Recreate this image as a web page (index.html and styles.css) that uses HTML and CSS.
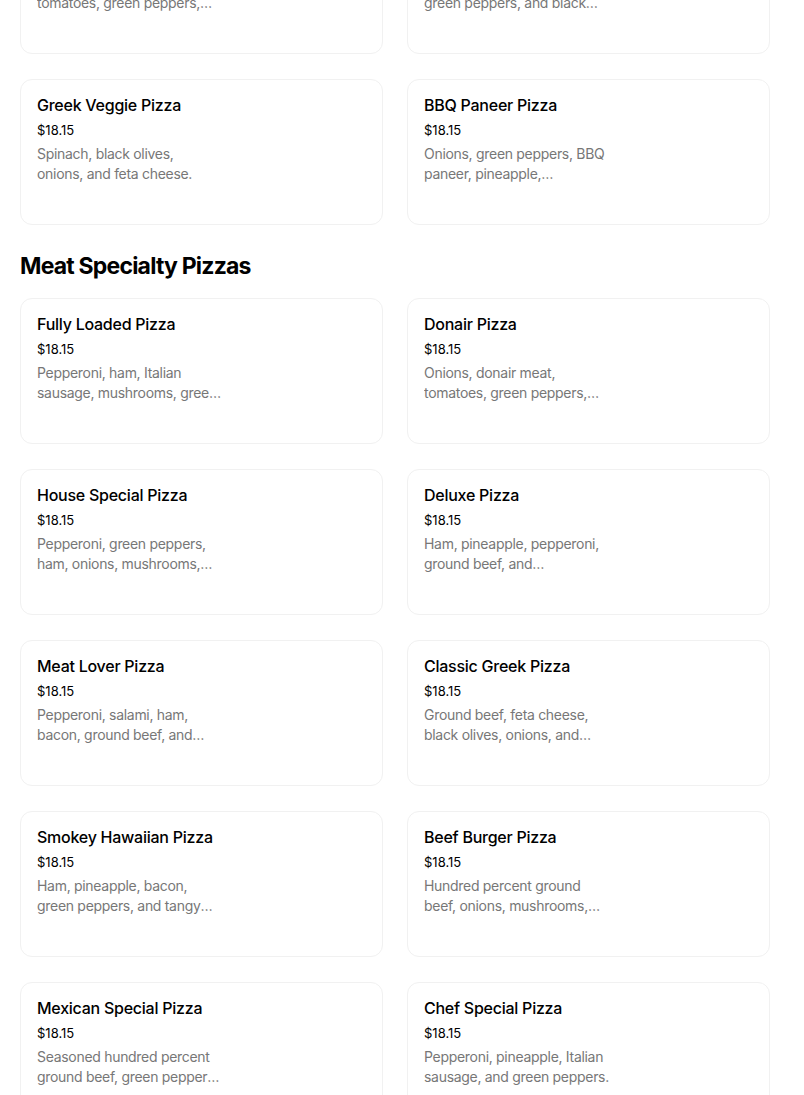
FILE: index.html
```html
<!DOCTYPE html>
<html>
<head>
<meta charset="utf-8">
<link rel="stylesheet" href="styles.css">
</head>
<body>
<div class="page">
  <div class="grid">
    <div class="card"><div class="name">Garden Veggie Pizza</div><div class="price">$18.15</div><div class="desc">Mushrooms, onions, tomatoes, green peppers, and black olives.</div></div>
    <div class="card"><div class="name">Vegetarian Pizza</div><div class="price">$18.15</div><div class="desc">Pineapple, mushrooms, green peppers, and black olives.</div></div>
    <div class="card"><div class="name">Greek Veggie Pizza</div><div class="price">$18.15</div><div class="desc">Spinach, black olives, onions, and feta cheese.</div></div>
    <div class="card"><div class="name">BBQ Paneer Pizza</div><div class="price">$18.15</div><div class="desc">Onions, green peppers, BBQ paneer, pineapple, mushrooms, and cheese.</div></div>
  </div>
  <h2 class="section">Meat Specialty Pizzas</h2>
  <div class="grid">
    <div class="card"><div class="name">Fully Loaded Pizza</div><div class="price">$18.15</div><div class="desc">Pepperoni, ham, Italian sausage, mushrooms, green peppers, and onions.</div></div>
    <div class="card"><div class="name">Donair Pizza</div><div class="price">$18.15</div><div class="desc">Onions, donair meat, tomatoes, green peppers, and donair sauce.</div></div>
    <div class="card"><div class="name">House Special Pizza</div><div class="price">$18.15</div><div class="desc">Pepperoni, green peppers, ham, onions, mushrooms, and ground beef.</div></div>
    <div class="card"><div class="name">Deluxe Pizza</div><div class="price">$18.15</div><div class="desc">Ham, pineapple, pepperoni, ground beef, and mushrooms.</div></div>
    <div class="card"><div class="name">Meat Lover Pizza</div><div class="price">$18.15</div><div class="desc">Pepperoni, salami, ham, bacon, ground beef, and Italian sausage.</div></div>
    <div class="card"><div class="name">Classic Greek Pizza</div><div class="price">$18.15</div><div class="desc">Ground beef, feta cheese, black olives, onions, and tomatoes.</div></div>
    <div class="card"><div class="name">Smokey Hawaiian Pizza</div><div class="price">$18.15</div><div class="desc">Ham, pineapple, bacon, green peppers, and tangy BBQ sauce.</div></div>
    <div class="card"><div class="name">Beef Burger Pizza</div><div class="price">$18.15</div><div class="desc">Hundred percent ground beef, onions, mushrooms, and cheddar.</div></div>
    <div class="card"><div class="name">Mexican Special Pizza</div><div class="price">$18.15</div><div class="desc">Seasoned hundred percent ground beef, green peppers, onions, and jalapenos.</div></div>
    <div class="card"><div class="name">Chef Special Pizza</div><div class="price">$18.15</div><div class="desc">Pepperoni, pineapple, Italian sausage, and green peppers.</div></div>
  </div>
</div>
</body>
</html>
```
FILE: styles.css
```css
html, body {
  margin: 0;
  padding: 0;
  background: #ffffff;
  overflow: hidden;
}
body {
  font-family: Inter, "Noto Sans", sans-serif;
  color: #000000;
}
.page {
  margin-top: -92px;
  padding: 0 34px 0 20px;
}
.grid {
  display: grid;
  grid-template-columns: 1fr 1fr;
  column-gap: 24px;
  row-gap: 25px;
}
.card {
  height: 146px;
  box-sizing: border-box;
  border: 1px solid #f1f1f1;
  border-radius: 12px;
  padding: 15px 16px;
}
.name {
  font-size: 16px;
  font-weight: 500;
  line-height: 20px;
  letter-spacing: -0.25px;
}
.price {
  margin-top: 5px;
  font-size: 13px;
  line-height: 20px;
}
.desc {
  margin-top: 4px;
  width: 186px;
  font-size: 14px;
  line-height: 20px;
  letter-spacing: -0.3px;
  color: #777777;
  display: -webkit-box;
  -webkit-line-clamp: 2;
  -webkit-box-orient: vertical;
  overflow: hidden;
}
.section {
  margin: 30px 0 20px;
  font-size: 23px;
  line-height: 23px;
  font-weight: 700;
  letter-spacing: -0.8px;
}
```
